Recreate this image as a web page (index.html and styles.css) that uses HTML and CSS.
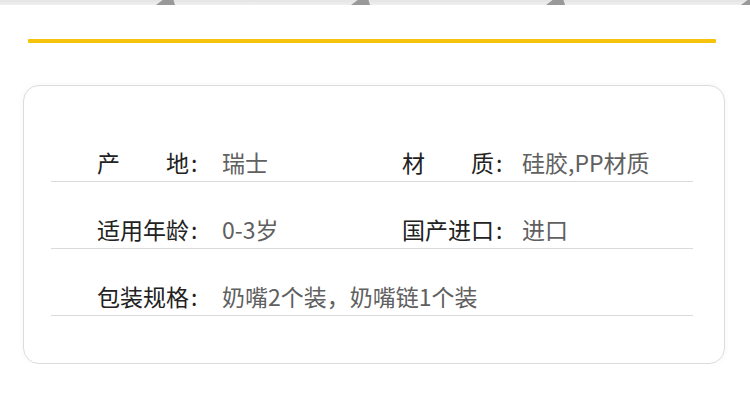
FILE: index.html
```html
<!DOCTYPE html>
<html lang="zh-CN">
<head>
  <meta charset="UTF-8" />
  <meta name="viewport" content="width=device-width, initial-scale=1.0"/>
  <title>产品参数</title>
  <link rel="stylesheet" href="styles.css">
</head>
<body>
  <div class="top-strip">
    <span class="mark"></span>
    <span class="mark"></span>
    <span class="mark"></span>
    <span class="mark"></span>
  </div>
  <div class="gold-line"></div>
  <section class="spec-card">
    <div class="spec-row">
      <div class="cell">
        <span class="label"><span class="label-text">产地</span>:</span>
        <span class="value">瑞士</span>
      </div>
      <div class="cell cell-right">
        <span class="label"><span class="label-text">材质</span>:</span>
        <span class="value">硅胶,PP材质</span>
      </div>
    </div>
    <div class="spec-row">
      <div class="cell">
        <span class="label"><span class="label-text">适用年龄</span>:</span>
        <span class="value">0-3岁</span>
      </div>
      <div class="cell cell-right">
        <span class="label"><span class="label-text">国产进口</span>:</span>
        <span class="value">进口</span>
      </div>
    </div>
    <div class="spec-row">
      <div class="cell">
        <span class="label"><span class="label-text">包装规格</span>:</span>
        <span class="value">奶嘴2个装，奶嘴链1个装</span>
      </div>
    </div>
  </section>
</body>
</html>
```

FILE: styles.css
```css
body { margin: 0; background: #fff; font-family: "Noto Sans CJK SC", "Noto Sans", sans-serif; color: #333; }
.top-strip { height: 5px; background: linear-gradient(#e4e4e4, #efefef); display: flex; gap: 176px; padding-left: 156px; overflow: hidden; }
.mark { flex: none; width: 19px; height: 5px; background: #999; clip-path: polygon(0 100%, 35% 0, 92% 0, 100% 100%); }
.gold-line { height: 4px; width: 688px; margin: 34px 0 0 28px; background: #f5c20c; border-radius: 1px; }
.spec-card { margin: 42px 0 0 23px; width: 642px; padding: 29px 31px 47px 27px; border: 1px solid #dcdcdc; border-radius: 16px; box-shadow: 0 0 6px rgba(0,0,0,0.04); }
.spec-row { display: grid; grid-template-columns: 305px 1fr; padding: 32px 0 4px 46px; border-bottom: 1px solid #dadada; }
.cell { display: flex; font-size: 23px; line-height: 30px; white-space: nowrap; }
.label { width: 125px; flex: none; color: #222; }
.cell-right .label { width: 120px; }
.label-text { display: inline-block; width: 92px; text-align: justify; text-align-last: justify; margin-right: 2px; }
.value { color: #606060; }
```
